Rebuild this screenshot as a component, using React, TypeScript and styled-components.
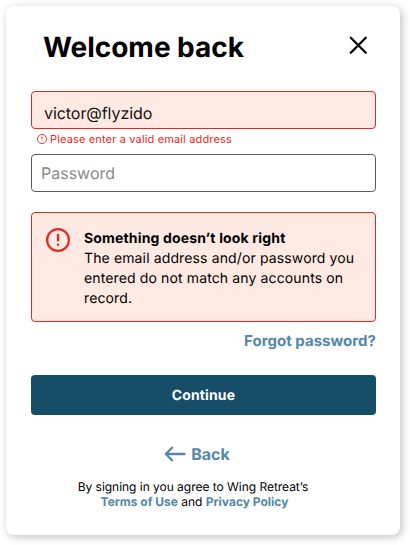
import React from 'react';
import styled, { createGlobalStyle } from 'styled-components';

const GlobalStyle = createGlobalStyle`
  *, *::before, *::after { box-sizing: border-box; }
  body {
    margin: 0;
    background: #fff;
    color: #000;
    font-family: Inter, "Liberation Sans", sans-serif;
    text-rendering: geometricPrecision;
    overflow: hidden;
  }
`;

const Page = styled.main`
  padding: 6px;
  height: 545px;
`;

const Card = styled.form`
  display: flex;
  flex-direction: column;
  width: 394px;
  height: 529px;
  padding: 0 24px 0 25px;
  border-radius: 8px;
  background: #fff;
  box-shadow: 2px 2px 8px rgba(0, 0, 0, 0.25);
`;

const Header = styled.header`
  display: flex;
  align-items: center;
  justify-content: space-between;
  height: 40px;
  margin-top: 21px;
  padding: 0 8px 0 12px;
`;

const Title = styled.h1`
  margin: 0;
  font-size: 28px;
  line-height: 40px;
  font-weight: 700;
  letter-spacing: -0.04px;
  white-space: nowrap;
`;

const IconButton = styled.button`
  display: flex;
  margin: 0 0 3px;
  padding: 0;
  border: 0;
  background: none;
`;

const Field = styled.input<{ $invalid?: boolean }>`
  flex: none;
  width: 100%;
  height: 38px;
  padding: ${(p) => (p.$invalid ? '6px 12px 0' : '0 9px')};
  border: 1px solid ${(p) => (p.$invalid ? '#e7271d' : '#5c5c5c')};
  border-radius: 4px;
  outline: 0;
  background: ${(p) => (p.$invalid ? '#ffe9e3' : '#fff')};
  color: #111;
  font: 400 16px Inter, sans-serif;
  letter-spacing: -0.06px;
  text-rendering: inherit;
  &::placeholder { color: #8a8a8a; opacity: 1; letter-spacing: 0; }
`;

const Fields = styled.div`
  display: flex;
  flex-direction: column;
  margin-top: 24px;
`;

const Hint = styled.div`
  display: flex;
  align-items: center;
  gap: 3px;
  height: 25px;
  padding: 0 0 5px 6px;
  color: #e7271d;
  font-size: 11px;
  letter-spacing: 0.15px;
  white-space: nowrap;
`;

const Alert = styled.section`
  display: flex;
  gap: 14px;
  height: 110px;
  margin-top: 20px;
  padding: 15px 0 0 14px;
  border: 1px solid #e7271d;
  border-radius: 4px;
  background: #ffe9e3;
  font-size: 14px;
  line-height: 20px;
  svg { flex: none; }
`;

const AlertBody = styled.div`
  padding-top: 1px;
`;

const AlertTitle = styled.strong`
  display: block;
  font-weight: 700;
  letter-spacing: 0.16px;
`;

const AlertText = styled.p`
  width: 275px;
  margin: 0;
  letter-spacing: 0.13px;
`;

const Link = styled.a`
  color: #5388a8;
  font-weight: 700;
  text-decoration: none;
`;

const ForgotLink = styled(Link)`
  align-self: flex-end;
  margin-top: 9px;
  font-size: 15px;
  line-height: 20px;
  letter-spacing: 0.03px;
`;

const SubmitButton = styled.button`
  height: 40px;
  margin-top: 24px;
  padding: 0;
  border: 0;
  border-radius: 4px;
  background: #164e68;
  color: #fff;
  font: 700 14px Inter, sans-serif;
  letter-spacing: 0.12px;
  text-rendering: inherit;
`;

const BackLink = styled(Link)`
  display: flex;
  align-items: center;
  align-self: center;
  gap: 5px;
  margin: 29px 0 0 -13px;
  font-size: 16px;
  line-height: 20px;
`;

const Legal = styled.p`
  margin: 15px 21px 0 0;
  font-size: 12px;
  line-height: 15px;
  letter-spacing: -0.03px;
  text-align: center;
`;

const LegalLinks = styled.span`
  display: block;
  padding-left: 3px;
  letter-spacing: 0;
`;

const WarningIcon = ({ size, stroke }: { size: number; stroke: number }) => (
  <svg width={size} height={size} viewBox="0 0 24 24" fill="none" stroke="#e7271d" strokeWidth={stroke}>
    <circle cx="12" cy="12" r={12 - stroke / 2} />
    <path d="M12 6v7.2M12 15.7v2.1" />
  </svg>
);

export default function App() {
  return (
    <Page>
      <GlobalStyle />
      <Card onSubmit={(e: React.FormEvent) => e.preventDefault()}>
        <Header>
          <Title>Welcome back</Title>
          <IconButton type="button" aria-label="Close">
            <svg width="19" height="19" viewBox="0 0 19 19" fill="none" stroke="#000" strokeWidth="2.3" strokeLinecap="round">
              <path d="M1.8 1.8l15 15M16.8 1.8L1.8 16.8" />
            </svg>
          </IconButton>
        </Header>
        <Fields>
          <Field type="text" $invalid defaultValue="victor@flyzido" aria-label="Email" />
          <Hint>
            <WarningIcon size={10} stroke={2.2} />
            Please enter a valid email address
          </Hint>
          <Field type="password" placeholder="Password" />
        </Fields>
        <Alert role="alert">
          <WarningIcon size={24} stroke={2.2} />
          <AlertBody>
            <AlertTitle>Something doesn’t look right</AlertTitle>
            <AlertText>The email address and/or password you entered do not match any accounts on record.</AlertText>
          </AlertBody>
        </Alert>
        <ForgotLink href="#">Forgot password?</ForgotLink>
        <SubmitButton type="submit">Continue</SubmitButton>
        <BackLink href="#">
          <svg width="22" height="16" viewBox="0 0 22 16" fill="none" stroke="#5388a8" strokeWidth="2.3" strokeLinecap="round" strokeLinejoin="round">
            <path d="M20.5 8H2M8 1.8L1.8 8L8 14.2" />
          </svg>
          Back
        </BackLink>
        <Legal>
          By signing in you agree to Wing Retreat’s
          <LegalLinks>
            <Link href="#">Terms of Use</Link> and <Link href="#">Privacy Policy</Link>
          </LegalLinks>
        </Legal>
      </Card>
    </Page>
  );
}
